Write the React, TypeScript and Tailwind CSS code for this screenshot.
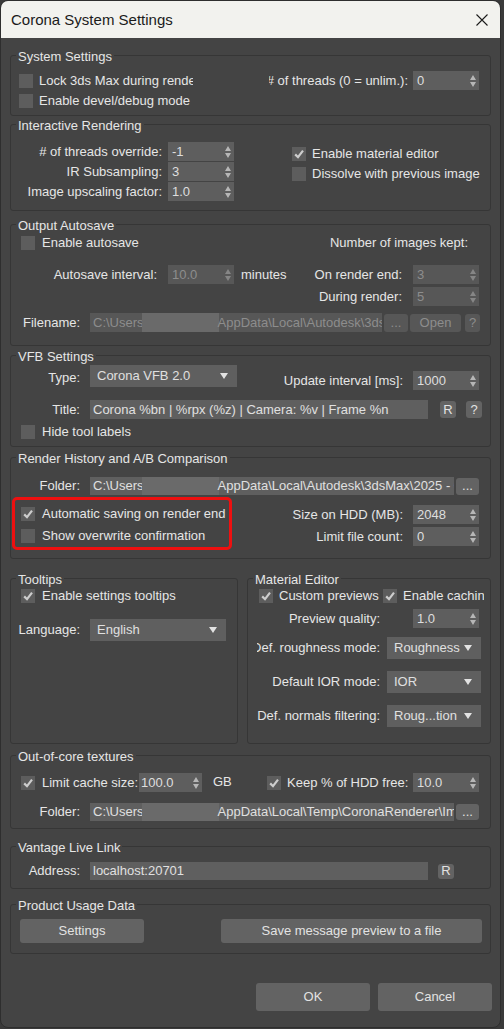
import React from 'react'

type Props = { className?: string; children?: React.ReactNode }

function Group({ title, className = '', children }: Props & { title: string }) {
  return (
    <fieldset className={`shrink-0 border border-[#363636] rounded-[3px] ${className}`}>
      <legend className="ml-[5px] px-[2px] h-[16px] pt-[3px] text-[13px] leading-[13px]">{title}</legend>
      {children}
    </fieldset>
  )
}

function Check({ on = false, className = '' }: { on?: boolean; className?: string }) {
  return (
    <div className={`w-[14px] h-[14px] shrink-0 bg-[#5d5d5d] flex items-center justify-center ${className}`}>
      {on && (
        <svg width="14" height="14" viewBox="0 0 14 14">
          <path d="M3.2 7.4 L6 10.2 L11 3.6" fill="none" stroke="#cdcdcd" strokeWidth="2.2" />
        </svg>
      )}
    </div>
  )
}

function Spin({ value, off = false, className = '' }: { value: string; off?: boolean; className?: string }) {
  return (
    <div
      className={`h-[19px] shrink-0 flex items-center justify-between pl-[4px] pr-[3px] ${
        off ? 'bg-[#575757] text-[#8d8d8d]' : 'bg-[#5e5e5e] text-[#dedede]'
      } ${className}`}
    >
      <span>{value}</span>
      <svg width="6" height="12" viewBox="0 0 6 12">
        <path d="M3 0 L6 5 L0 5 Z M0 7 L6 7 L3 12 Z" fill={off ? '#868686' : '#b6b6b6'} />
      </svg>
    </div>
  )
}

function Drop({ value, className = '' }: { value: string; className?: string }) {
  return (
    <div className={`h-[22px] shrink-0 bg-[#5f5f5f] text-[#e0e0e0] flex items-center pl-[7px] pr-[9px] ${className}`}>
      <span className="flex-1 overflow-hidden whitespace-nowrap">{value}</span>
      <svg width="8" height="6" viewBox="0 0 8 6" className="ml-[4px] shrink-0">
        <path d="M0 0 H8 L4 6 Z" fill="#e2e2e2" />
      </svg>
    </div>
  )
}

function Btn({ off = false, className = '', children }: Props & { off?: boolean }) {
  return (
    <div
      className={`shrink-0 flex items-center justify-center rounded-[3px] ${
        off ? 'bg-[#575757] text-[#8d8d8d]' : 'bg-[#636363] text-[#e2e2e2]'
      } ${className}`}
    >
      {children}
    </div>
  )
}

function Field({ off = false, className = '', children }: Props & { off?: boolean }) {
  return (
    <div
      className={`shrink-0 flex items-stretch pl-[3px] overflow-hidden whitespace-nowrap ${
        off ? 'bg-[#575757] text-[#8d8d8d]' : 'bg-[#5f5f5f] text-[#e0e0e0]'
      } ${className}`}
    >
      {children}
    </div>
  )
}

// user folder is masked out with a flat block
function UserPath({ tail }: { tail: string }) {
  return (
    <>
      <span className="self-center">C:\Users</span>
      <span className="w-[77px] shrink-0 -ml-[2px] bg-[#6a6a6a]" />
      <span className="self-center -ml-[1px]">{tail}</span>
    </>
  )
}

// right-aligned label, clipped on the left when too long
function Lbl({ className = '', children }: Props) {
  return (
    <div className={`shrink-0 flex justify-end overflow-hidden whitespace-nowrap ${className}`}>
      <span className="shrink-0">{children}</span>
    </div>
  )
}

export default function App() {
  return (
    <div className="w-[504px] h-[1029px] bg-[#3a3a3a] font-['Liberation_Sans',Arial,sans-serif] text-[13px] leading-[16px] text-[#e6e6e6]">
      <div className="w-[501px] h-[1028px] border border-[#2e2e2e] rounded-[8px] overflow-hidden bg-[#444444] flex flex-col">
        {/* Title bar */}
        <div className="h-[37px] shrink-0 bg-[#f2f2ee] flex items-center justify-between pl-[10px] pr-[12px]">
          <span className="text-[15px] leading-[18px] text-[#1b1b1b]">Corona System Settings</span>
          <svg width="12" height="12" viewBox="0 0 12 12">
            <path d="M0.5 0.5 L11.5 11.5 M11.5 0.5 L0.5 11.5" stroke="#1b1b1b" strokeWidth="1.1" />
          </svg>
        </div>

        <div className="flex flex-col px-[9px]">
          {/* System Settings */}
          <Group title="System Settings" className="mt-[9px] h-[69px]">
            <div className="flex items-center h-[19px] mt-[8px]">
              <Check className="ml-[8px]" />
              <span className="ml-[6px] w-[154px] shrink-0 overflow-hidden whitespace-nowrap">Lock 3ds Max during rendering</span>
              <Lbl className="ml-[76px] w-[139px]"># of threads (0 = unlim.):</Lbl>
              <Spin value="0" className="ml-[5px] w-[66px]" />
            </div>
            <div className="flex items-center h-[19px] mt-[1px]">
              <Check className="ml-[8px]" />
              <span className="ml-[6px]">Enable devel/debug mode</span>
            </div>
          </Group>

          {/* Interactive Rendering */}
          <Group title="Interactive Rendering" className="h-[95px]">
            <div className="flex">
              <div className="flex flex-col gap-[1px] mt-[10px]">
                {[
                  ['# of threads override:', '-1'],
                  ['IR Subsampling:', '3'],
                  ['Image upscaling factor:', '1.0'],
                ].map(([l, v]) => (
                  <div key={l} className="flex items-center h-[19px]">
                    <Lbl className="w-[151px]">{l}</Lbl>
                    <Spin value={v} className="ml-[6px] w-[66px]" />
                  </div>
                ))}
              </div>
              <div className="flex flex-col mt-[12px] ml-[58px]">
                <div className="flex items-center h-[20px]">
                  <Check on />
                  <span className="ml-[6px]">Enable material editor</span>
                </div>
                <div className="flex items-center h-[20px]">
                  <Check />
                  <span className="ml-[6px]">Dissolve with previous image</span>
                </div>
              </div>
            </div>
          </Group>

          {/* Output Autosave */}
          <Group title="Output Autosave" className="mt-[5px] h-[130px]">
            <div className="flex items-center h-[16px] mt-[3px]">
              <Check className="ml-[10px]" />
              <span className="ml-[7px]">Enable autosave</span>
              <span className="ml-auto mr-[22px]">Number of images kept:</span>
            </div>
            <div className="flex items-center h-[19px] mt-[14px]">
              <Lbl className="w-[146px]">Autosave interval:</Lbl>
              <Spin value="10.0" off className="ml-[11px] w-[66px]" />
              <span className="ml-[7px]">minutes</span>
              <div className="ml-auto mr-[11px] flex items-center">
                <span>On render end:</span>
                <Spin value="3" off className="ml-[11px] w-[66px]" />
              </div>
            </div>
            <div className="flex items-center justify-end h-[19px] mt-[3px] mr-[11px]">
              <span>During render:</span>
              <Spin value="5" off className="ml-[11px] w-[66px]" />
            </div>
            <div className="flex items-center h-[19px] mt-[7px]">
              <span className="ml-[12px] w-[67px] shrink-0">Filename:</span>
              <Field off className="w-[292px] h-[19px]">
                <UserPath tail="AppData\Local\Autodesk\3dsMax\2025 - 64bit\ENU\autosave\CoronaAutosave.exr" />
              </Field>
              <Btn off className="ml-[2px] w-[24px] h-[18px]">...</Btn>
              <Btn off className="ml-[2px] w-[51px] h-[18px]">Open</Btn>
              <Btn off className="ml-[4px] w-[15px] h-[18px]">?</Btn>
            </div>
          </Group>

          {/* VFB Settings */}
          <Group title="VFB Settings" className="mt-[1px] h-[100px]">
            <div className="flex items-start mt-[2px]">
              <Lbl className="w-[69px] mt-[5px]">Type:</Lbl>
              <Drop value="Corona VFB 2.0" className="ml-[10px] w-[147px]" />
              <div className="ml-auto mr-[11px] mt-[6px] flex items-center">
                <span>Update interval [ms]:</span>
                <Spin value="1000" className="ml-[10px] w-[66px]" />
              </div>
            </div>
            <div className="flex items-center h-[19px] mt-[10px]">
              <Lbl className="w-[69px]">Title:</Lbl>
              <Field className="ml-[10px] w-[338px] h-[19px]">
                <span className="self-center">Corona %bn | %rpx (%z) | Camera: %v | Frame %n</span>
              </Field>
              <Btn className="ml-[12px] w-[16px] h-[17px]">R</Btn>
              <Btn className="ml-[10px] w-[16px] h-[17px]">?</Btn>
            </div>
            <div className="flex items-center h-[16px] mt-[5px]">
              <Check className="ml-[10px]" />
              <span className="ml-[7px]">Hide tool labels</span>
            </div>
          </Group>

          {/* Render History and A/B Comparison */}
          <Group title="Render History and A/B Comparison" className="mt-[2px] h-[110px]">
            <div className="flex items-center h-[18px] mt-[12px]">
              <Lbl className="w-[69px]">Folder:</Lbl>
              <Field className="ml-[10px] w-[364px] h-[18px]">
                <UserPath tail="AppData\Local\Autodesk\3dsMax\2025 - 64bit\ENU\CoronaHistory" />
              </Field>
              <Btn className="ml-[2px] w-[23px] h-[17px]">...</Btn>
            </div>
            <div className="flex items-start mt-[2px]">
              <div className="ml-[1px] w-[220px] shrink-0 border-[3px] border-[#ee1010] rounded-[5px] pt-[3px] flex flex-col">
                <div className="flex items-center h-[22px]">
                  <Check on className="ml-[6px]" />
                  <span className="ml-[7px] whitespace-nowrap">Automatic saving on render end</span>
                </div>
                <div className="flex items-center h-[22px]">
                  <Check className="ml-[6px]" />
                  <span className="ml-[7px] whitespace-nowrap">Show overwrite confirmation</span>
                </div>
              </div>
              <div className="ml-auto mr-[11px] mt-[8px] flex flex-col items-end gap-[3px]">
                <div className="flex items-center">
                  <span>Size on HDD (MB):</span>
                  <Spin value="2048" className="ml-[10px] w-[66px]" />
                </div>
                <div className="flex items-center">
                  <span>Limit file count:</span>
                  <Spin value="0" className="ml-[10px] w-[66px]" />
                </div>
              </div>
            </div>
          </Group>

          {/* Tooltips + Material Editor */}
          <div className="flex gap-[9px] mt-[11px]">
            <Group title="Tooltips" className="w-[228px] h-[174px]">
              <div className="flex items-center h-[16px] mt-[2px]">
                <Check on className="ml-[10px]" />
                <span className="ml-[7px]">Enable settings tooltips</span>
              </div>
              <div className="flex items-center h-[22px] mt-[15px]">
                <Lbl className="w-[69px]">Language:</Lbl>
                <Drop value="English" className="ml-[10px] w-[136px]" />
              </div>
            </Group>
            <Group title="Material Editor" className="w-[244px] h-[174px]">
              <div className="flex items-center h-[16px] mt-[2px] w-[236px] overflow-hidden whitespace-nowrap">
                <Check on className="ml-[11px]" />
                <span className="ml-[6px] w-[98px] shrink-0">Custom previews</span>
                <Check on className="ml-[6px]" />
                <span className="ml-[6px]">Enable caching</span>
              </div>
              <div className="flex items-center h-[19px] mt-[5px]">
                <Lbl className="w-[132px]">Preview quality:</Lbl>
                <Spin value="1.0" className="ml-[33px] w-[66px]" />
              </div>
              {[
                ['Def. roughness mode:', 'Roughness', 'mt-[9px]'],
                ['Default IOR mode:', 'IOR', 'mt-[12px]'],
                ['Def. normals filtering:', 'Roug...tion', 'mt-[12px]'],
              ].map(([l, v, m]) => (
                <div key={l} className={`flex items-center h-[22px] ${m}`}>
                  <Lbl className="ml-[9px] w-[123px]">{l}</Lbl>
                  <Drop value={v} className="ml-[7px] w-[94px]" />
                </div>
              ))}
            </Group>
          </div>

          {/* Out-of-core textures */}
          <Group title="Out-of-core textures" className="mt-[3px] h-[82px]">
            <div className="flex items-center h-[19px] mt-[10px] whitespace-nowrap">
              <Check on className="ml-[10px]" />
              <span className="ml-[7px] w-[97px] shrink-0">Limit cache size:</span>
              <Spin value="100.0" className="w-[63px] !pl-[2px]" />
              <span className="ml-[11px] w-[54px] shrink-0 -mt-[2px]">GB</span>
              <Check on />
              <span className="ml-[6px] w-[126px] shrink-0">Keep % of HDD free:</span>
              <Spin value="10.0" className="w-[66px]" />
            </div>
            <div className="flex items-center h-[18px] mt-[11px]">
              <Lbl className="w-[69px]">Folder:</Lbl>
              <Field className="ml-[10px] w-[364px] h-[18px]">
                <UserPath tail="AppData\Local\Temp\CoronaRenderer\ImageCache" />
              </Field>
              <Btn className="ml-[2px] w-[23px] h-[16px]">...</Btn>
            </div>
          </Group>

          {/* Vantage Live Link */}
          <Group title="Vantage Live Link" className="mt-[9px] h-[51px]">
            <div className="flex items-center h-[18px] mt-[8px]">
              <Lbl className="w-[69px]">Address:</Lbl>
              <Field className="ml-[10px] w-[338px] h-[18px]">
                <span className="self-center">localhost:20701</span>
              </Field>
              <Btn className="ml-[10px] w-[16px] h-[15px]">R</Btn>
            </div>
          </Group>

          {/* Product Usage Data */}
          <Group title="Product Usage Data" className="mt-[7px] h-[58px]">
            <div className="flex items-center mt-[7px]">
              <Btn className="ml-[9px] w-[124px] h-[24px]">Settings</Btn>
              <Btn className="ml-[77px] w-[261px] h-[24px]">Save message preview to a file</Btn>
            </div>
          </Group>

          <div className="flex justify-end gap-[8px] mt-[29px] -mr-[1px]">
            <Btn className="w-[114px] h-[28px]">OK</Btn>
            <Btn className="w-[114px] h-[28px]">Cancel</Btn>
          </div>
        </div>
      </div>
    </div>
  )
}
